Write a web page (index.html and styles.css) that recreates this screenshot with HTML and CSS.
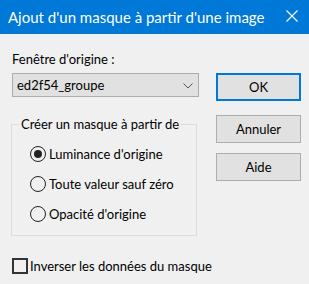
FILE: index.html
```html
<html lang="fr">
<head>
    <meta charset="UTF-8">
    <title>Ajout d'un masque à partir d'une image</title>
    <link rel="stylesheet" href="styles.css">
</head>
<body>
    <div class="dialog">
        <div class="titlebar">
            <span class="title">Ajout d'un masque à partir d'une image</span>
            <svg class="close" width="12" height="12" viewBox="0 0 12 12">
                <path d="M0.5 0.5 L11.5 11.5 M11.5 0.5 L0.5 11.5" stroke="#fff" stroke-width="1.1" fill="none"/>
            </svg>
        </div>
        <div class="content">
            <div class="main">
                <div class="left">
                    <div class="field-label">Fenêtre d'origine :</div>
                    <div class="select">
                        <span>ed2f54_groupe</span>
                        <svg class="chevron" width="10" height="6" viewBox="0 0 10 6">
                            <path d="M0.5 0.5 L5 5 L9.5 0.5" stroke="#555" stroke-width="1" fill="none"/>
                        </svg>
                    </div>
                    <fieldset class="group">
                        <legend>Créer un masque à partir de</legend>
                        <label class="radio"><span class="dot checked"></span>Luminance d'origine</label>
                        <label class="radio"><span class="dot"></span>Toute valeur sauf zéro</label>
                        <label class="radio"><span class="dot"></span>Opacité d'origine</label>
                    </fieldset>
                </div>
                <div class="buttons">
                    <button class="btn default">OK</button>
                    <button class="btn cancel">Annuler</button>
                    <button class="btn help">Aide</button>
                </div>
            </div>
            <label class="check"><span class="box"></span>Inverser les données du masque</label>
        </div>
    </div>
</body>
</html>
```

FILE: styles.css
```css
body {
    margin: 0;
    padding: 0;
    background: #f0f0f0;
    font-family: Lato, "Noto Sans", sans-serif;
    font-size: 13px;
    color: #000;
    white-space: nowrap;
}

.dialog {
    width: 309px;
    height: 284px;
    overflow: hidden;
}

.titlebar {
    height: 34px;
    background: #0078d7;
    color: #fff;
    display: flex;
    align-items: center;
    justify-content: space-between;
    padding: 0 11px 0 8px;
    box-sizing: border-box;
}
.title {
    font-size: 15px;
    line-height: 20px;
}
.close {
    margin-top: -2px;
}

.content {
    padding: 16px 0 0 11px;
}
.main {
    display: flex;
    gap: 17px;
}
.left {
    width: 188px;
}
.field-label {
    line-height: 18px;
    padding-left: 1px;
}
.select {
    margin: 5px 0 0 1px;
    height: 24px;
    box-sizing: border-box;
    border: 1px solid #adadad;
    background: #e1e1e1;
    display: flex;
    align-items: center;
    justify-content: space-between;
    padding: 0 5px 0 4px;
}
.chevron {
    margin-top: 1px;
}

.group {
    margin: 18px 0 0 0;
    width: 186px;
    min-width: 0;
    box-sizing: border-box;
    border: 1px solid #dcdcdc;
    padding: 6px 0 6px 18px;
}
.group legend {
    margin-left: -11px;
    padding: 0 2px;
    line-height: 18px;
}
.radio {
    display: flex;
    align-items: center;
    gap: 3px;
    height: 30px;
}
.dot {
    width: 16px;
    height: 16px;
    box-sizing: border-box;
    border: 1px solid #222;
    border-radius: 50%;
    display: flex;
    align-items: center;
    justify-content: center;
}
.dot.checked::after {
    content: "";
    width: 8px;
    height: 8px;
    border-radius: 50%;
    background: #222;
}

.buttons {
    display: flex;
    flex-direction: column;
    padding-top: 23px;
}
.btn {
    width: 85px;
    height: 28px;
    box-sizing: border-box;
    border: 1px solid #adadad;
    background: #e1e1e1;
    font-family: inherit;
    font-size: 13px;
    color: #000;
    padding: 0;
}
.btn.default {
    border: 2px solid #0078d7;
}
.btn.cancel {
    margin-top: 14px;
}
.btn.help {
    margin-top: 10px;
}

.check {
    display: flex;
    align-items: center;
    gap: 2px;
    height: 16px;
    margin-top: 22px;
    padding-left: 1px;
}
.box {
    width: 16px;
    height: 16px;
    box-sizing: border-box;
    border: 2px solid #333;
}
```
